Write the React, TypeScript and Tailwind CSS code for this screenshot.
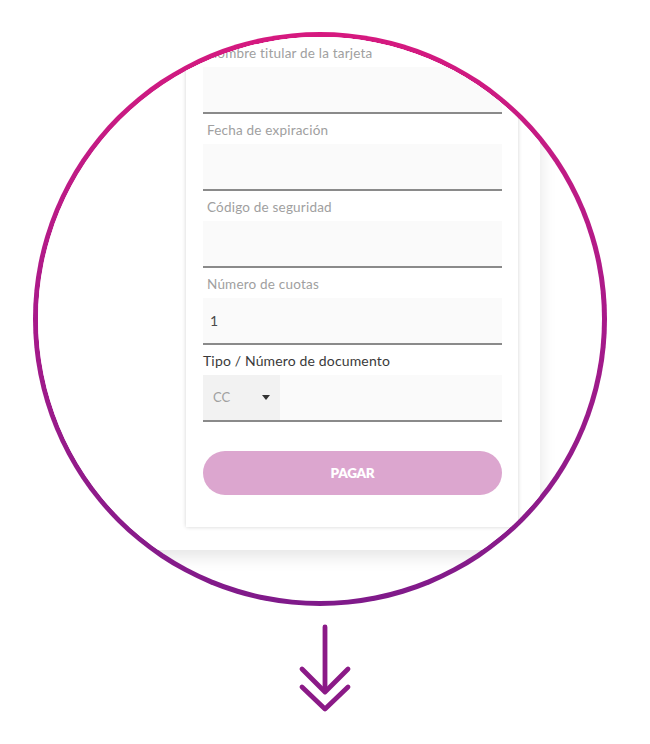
import React from "react";

const font = { fontFamily: "Lato, 'Open Sans', sans-serif" };

function Label({ text, dark }: { text: string; dark?: boolean }) {
  return (
    <div
      className={
        dark
          ? "h-[30px] flex items-center pt-[1px] text-[14px] tracking-[0.15px] text-[#3a3a3a]"
          : "h-[30px] flex items-center pt-[2px] pl-[4px] text-[13.5px] tracking-[0.2px] text-[#a0a0a0]"
      }
    >
      {text}
    </div>
  );
}

function Field({ label, children }: { label: string; children?: React.ReactNode }) {
  return (
    <div>
      <Label text={label} />
      <div className="h-[47px] bg-[#fafafa] border-b-2 border-[#8a8a8a] flex items-center">{children}</div>
    </div>
  );
}

export default function App() {
  return (
    <div className="w-[650px] h-[744px] bg-white flex flex-col pt-[32px]" style={font}>
      <div className="ml-[33px] w-[574px] h-[574px] rounded-full bg-linear-to-b from-[#d6197f] via-[#a8198a] to-[#7f1a8a] p-[5px]">
        <div className="w-full h-full rounded-full overflow-hidden bg-white relative">
          <div className="mt-[-40px] ml-[-40px] w-[542px] h-[553px] bg-white shadow-[0_6px_16px_rgba(0,0,0,0.11)] pt-[20px] pl-[188px]">
            <div className="w-[332px] h-[510px] bg-white shadow-[0_0_4px_rgba(0,0,0,0.18)] pt-[20px] pl-[17px] pr-[16px]">
              <Field label="Nombre titular de la tarjeta" />
              <Field label="Fecha de expiración" />
              <Field label="Código de seguridad" />
              <Field label="Número de cuotas">
                <span className="pl-[7px] text-[14px] text-[#4a4a4a]">1</span>
              </Field>
              <div>
                <Label text="Tipo / Número de documento" dark />
                <div className="h-[47px] bg-[#fafafa] border-b-2 border-[#8a8a8a] flex">
                  <div className="w-[77px] h-full bg-[#f2f2f2] flex items-center pl-[10px] pr-[10px]">
                    <span className="text-[13px] text-[#a0a0a0]">CC</span>
                    <span className="ml-auto w-0 h-0 border-l-[4px] border-r-[4px] border-t-[5px] border-l-transparent border-r-transparent border-t-[#333]" />
                  </div>
                </div>
              </div>
              <div className="mt-[29px] h-[44px] rounded-full bg-[#dca6cf] flex items-center justify-center text-white font-extrabold text-[13.5px] tracking-[-0.3px]">
                PAGAR
              </div>
            </div>
          </div>
        </div>
      </div>
      <div className="flex justify-center mt-[14px]">
        <svg width="60" height="95" viewBox="0 0 60 95" fill="none" stroke="#8b1a87" strokeWidth="4.8" strokeLinecap="round" strokeLinejoin="round">
          <path d="M30 7 L30 71" />
          <path d="M7 49 L30 72 L53 49" />
          <path d="M7 67 L30 89 L53 67" />
        </svg>
      </div>
    </div>
  );
}
